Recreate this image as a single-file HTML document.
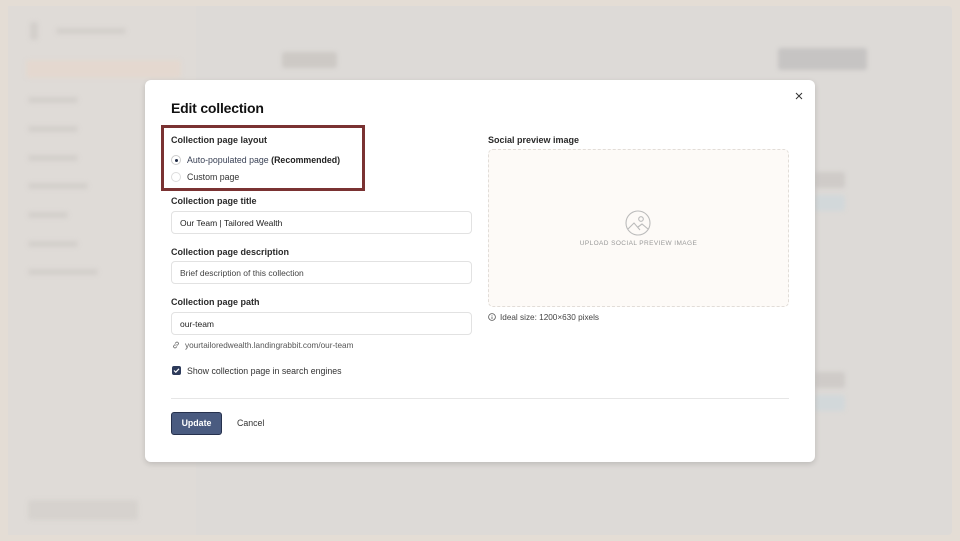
<!DOCTYPE html>
<html><head><meta charset="utf-8"><style>
*{box-sizing:border-box;margin:0;padding:0}
body{width:960px;height:541px;overflow:hidden;background:#e4ddd5;font-family:"Liberation Sans",sans-serif;position:relative}
.bg{position:absolute;left:8px;top:6px;right:8px;bottom:6px;background:#dddad7;border-radius:4px}
.side{position:absolute;left:8px;top:6px;width:188px;bottom:6px;background:#dfdbd7}
.blur{position:absolute;background:#d3cfcb;border-radius:3px;filter:blur(2px)}
.modal{position:absolute;left:145px;top:80px;width:670px;height:382px;background:#fff;border-radius:6px;box-shadow:0 2px 6px rgba(0,0,0,.15)}
.t{position:absolute;font-size:14px;font-weight:bold;color:#111;left:26px;top:20px;letter-spacing:-.2px}
.lbl{position:absolute;font-size:9px;font-weight:bold;color:#2a2a2a}
.inp{position:absolute;left:26px;width:301px;height:23px;border:1px solid #e2e2e2;border-radius:4px;font-size:8.5px;color:#222;padding:0 8px;line-height:22px}
.red{position:absolute;left:16px;top:45px;width:204px;height:66px;border:3px solid #7a3232}
.radio{position:absolute;width:10px;height:10px;border-radius:50%;border:1px solid #ddd}
.txt{position:absolute;font-size:8.8px;color:#333}
</style></head><body>
<div class="bg"></div>
<div class="side"></div>
<div class="blur" style="left:30px;top:22px;width:8px;height:18px"></div>
<div class="blur" style="left:56px;top:28px;width:70px;height:6px"></div>
<div class="blur" style="left:26px;top:60px;width:155px;height:18px;background:#e4d8cf"></div>
<div class="blur" style="left:28px;top:97px;width:50px;height:6px"></div>
<div class="blur" style="left:28px;top:126px;width:50px;height:6px"></div>
<div class="blur" style="left:28px;top:155px;width:50px;height:6px"></div>
<div class="blur" style="left:28px;top:183px;width:60px;height:6px"></div>
<div class="blur" style="left:28px;top:212px;width:40px;height:6px"></div>
<div class="blur" style="left:28px;top:241px;width:50px;height:6px"></div>
<div class="blur" style="left:28px;top:269px;width:70px;height:6px"></div>
<div class="blur" style="left:282px;top:52px;width:55px;height:16px;background:#cdc9c5"></div>
<div class="blur" style="left:778px;top:48px;width:89px;height:22px;background:#c6c4c3"></div>
<div class="blur" style="left:815px;top:172px;width:30px;height:16px;background:#cfcbc8"></div>
<div class="blur" style="left:815px;top:195px;width:30px;height:16px;background:#d2d8da"></div>
<div class="blur" style="left:815px;top:372px;width:30px;height:16px;background:#cfcbc8"></div>
<div class="blur" style="left:815px;top:395px;width:30px;height:16px;background:#d2d8da"></div>
<div class="blur" style="left:28px;top:500px;width:110px;height:20px;background:#d6d2ce"></div>
<div class="modal">
<div class="t">Edit collection</div>
<svg style="position:absolute;left:650px;top:12px" width="8" height="8" viewBox="0 0 8 8"><path d="M1 1L7 7M7 1L1 7" stroke="#333" stroke-width="1"/></svg>
<div class="red"></div>
<div class="lbl" style="left:26px;top:55px">Collection page layout</div>
<div class="radio" style="left:26px;top:75px;border-color:#ccc"><div style="position:absolute;left:2.5px;top:2.5px;width:3px;height:3px;border-radius:50%;background:#1f2a44"></div></div>
<div class="txt" style="left:42px;top:75px;color:#3a4256">Auto-populated page <b style="color:#222">(Recommended)</b></div>
<div class="radio" style="left:26px;top:92px"></div>
<div class="txt" style="left:42px;top:92px">Custom page</div>
<div class="lbl" style="left:26px;top:116px">Collection page title</div>
<div class="inp" style="top:131px">Our Team | Tailored Wealth</div>
<div class="lbl" style="left:26px;top:167px">Collection page description</div>
<div class="inp" style="top:181px;color:#444">Brief description of this collection</div>
<div class="lbl" style="left:26px;top:217px">Collection page path</div>
<div class="inp" style="top:232px">our-team</div>
<svg style="position:absolute;left:27px;top:261px" width="8" height="8" viewBox="0 0 8 8"><path d="M3.5 4.5L4.5 3.5M3 2.5L4 1.5a1.4 1.4 0 012 2L5 4.5M5 5.5L4 6.5a1.4 1.4 0 01-2-2L3 3.5" stroke="#666" fill="none" stroke-width=".8"/></svg>
<div class="txt" style="left:40px;top:261px;font-size:8.2px;color:#555">yourtailoredwealth.landingrabbit.com/our-team</div>
<div style="position:absolute;left:27px;top:286px;width:9px;height:9px;border-radius:2px;background:#2d3a5a"><svg width="9" height="9" viewBox="0 0 9 9" style="position:absolute;left:0;top:0"><path d="M2 4.5L3.8 6.2L7 2.8" stroke="#fff" fill="none" stroke-width="1.2"/></svg></div>
<div class="txt" style="left:42px;top:286px">Show collection page in search engines</div>
<div style="position:absolute;left:26px;top:318px;width:618px;height:1px;background:#e6e6e6"></div>
<div style="position:absolute;left:26px;top:332px;width:51px;height:23px;background:#4a5b80;border:1px solid #26314d;border-radius:3px;color:#fff;font-size:8.8px;text-align:center;line-height:21px;font-weight:bold">Update</div>
<div class="txt" style="left:92px;top:338px">Cancel</div>
<div class="lbl" style="left:343px;top:55px">Social preview image</div>
<div style="position:absolute;left:343px;top:69px;width:301px;height:158px;border:1px dashed #e2ddd8;border-radius:5px;background:#fdfaf7"></div>
<svg style="position:absolute;left:480px;top:130px" width="26" height="26" viewBox="0 0 26 26"><circle cx="13" cy="13" r="12" stroke="#bbb" fill="none" stroke-width="1.1"/><circle cx="16" cy="9" r="2.3" stroke="#bbb" fill="none" stroke-width="1.1"/><path d="M3 19L9 13L15 20M13 17L17 14L23 19" stroke="#bbb" fill="none" stroke-width="1.1"/></svg>
<div class="txt" style="left:343px;width:301px;text-align:center;top:160px;font-size:6.5px;color:#999;letter-spacing:.4px">UPLOAD SOCIAL PREVIEW IMAGE</div>
<svg style="position:absolute;left:343px;top:233px" width="8" height="8" viewBox="0 0 8 8"><circle cx="4" cy="4" r="3.4" stroke="#555" fill="none" stroke-width=".8"/><path d="M4 3.5V6M4 2V2.6" stroke="#555" stroke-width=".8"/></svg>
<div class="txt" style="left:355px;top:233px;font-size:8.2px;color:#444">Ideal size: 1200×630 pixels</div>
</div>
</body></html>
